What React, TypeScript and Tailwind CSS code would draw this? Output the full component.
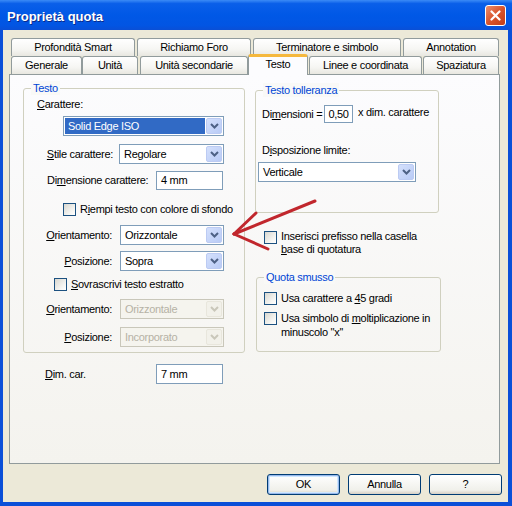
import React from "react";

const Chevron = ({ disabled }: { disabled?: boolean }) => (
  <svg width="9" height="6" viewBox="0 0 9 6">
    <path d="M1 1 L4.5 4.5 L8 1" fill="none" stroke={disabled ? "#c9c7ba" : "#4d6185"} strokeWidth="2" />
  </svg>
);

const Select = ({
  text,
  w,
  highlight,
  disabled,
}: {
  text: string;
  w: string;
  highlight?: boolean;
  disabled?: boolean;
}) => (
  <div
    className={`${w} h-[20px] flex items-stretch border p-[1px] ${
      disabled ? "border-[#c9c7ba] bg-[#f5f4ee] text-[#b5b2a5]" : "border-[#7f9db9] bg-white text-black"
    }`}
  >
    <div className="flex-1 flex items-center">
      {highlight ? (
        <div className="h-full flex-1 mr-[1px] bg-[#316ac5] text-white flex items-center pl-[3px]">{text}</div>
      ) : (
        <div className="pl-[3px]">{text}</div>
      )}
    </div>
    <div
      className={`w-[16px] flex items-center justify-center rounded-[2px] border ${
        disabled
          ? "border-[#e8e6dc] bg-[#f2f1ea]"
          : "border-[#bccbf3] bg-[linear-gradient(135deg,#d4e0fc,#b9cbf6)]"
      }`}
    >
      <Chevron disabled={disabled} />
    </div>
  </div>
);

const Input = ({ text, w, center }: { text: string; w: string; center?: boolean }) => (
  <div
    className={`${w} h-[19px] border border-[#7f9db9] bg-white flex items-center ${
      center ? "justify-center" : "pl-[4px]"
    }`}
  >
    {text}
  </div>
);

const Check = () => (
  <div className="w-[13px] h-[13px] shrink-0 border border-[#1c5180] bg-[linear-gradient(135deg,#d8d7d0,#f6f6f3_70%,#ffffff)]" />
);

const Group = ({
  label,
  className,
  children,
}: {
  label: string;
  className: string;
  children?: React.ReactNode;
}) => (
  <div className={`relative border border-[#d0d0bf] rounded-[3px] flex flex-col ${className}`}>
    <span className="absolute left-[7px] top-[-8px] px-[2px] leading-[14px] text-[#0046d5] bg-[#f9f9f7]">
      {label}
    </span>
    {children}
  </div>
);

const Tab = ({ label, w, ml }: { label: string; w: string; ml?: string }) => (
  <div
    className={`${w} ${ml ?? ""} h-[18px] flex items-center justify-center border border-b-0 border-[#919b9c] rounded-t-[3px] bg-[linear-gradient(#ffffff,#f6f6f3_60%,#e8e7e0)]`}
  >
    {label}
  </div>
);

export default function App() {
  return (
    <div
      className="relative w-[512px] h-[506px] flex flex-col bg-[#0a4fd8] text-[11px] leading-[13px] tracking-[-0.3px] text-black"
      style={{ fontFamily: "'Liberation Sans', Arial, sans-serif" }}
    >
      {/* Title bar */}
      <div className="h-[30px] flex items-center justify-between pl-[7px] pr-[6px] bg-[linear-gradient(#3b8bf6,#0a5fe9_12%,#0058e6_50%,#0255e3_85%,#0a4fd6)]">
        <span
          className="text-white font-bold text-[13px] tracking-[0px] pt-[2px]"
          style={{ textShadow: "1px 1px #0b2a8a" }}
        >
          Proprietà quota
        </span>
        <div className="w-[21px] h-[21px] rounded-[3px] border border-white bg-[linear-gradient(135deg,#eb8f6f,#d9542c_50%,#c13d17)] flex items-center justify-center">
          <svg width="11" height="11" viewBox="0 0 11 11">
            <path d="M1.5 1.5 L9.5 9.5 M9.5 1.5 L1.5 9.5" stroke="white" strokeWidth="2.2" strokeLinecap="round" />
          </svg>
        </div>
      </div>

      {/* Body */}
      <div className="flex-1 ml-[3px] mr-[4px] mb-[4px] bg-[#ece9d8] flex flex-col pl-[6px] pt-[8px]">
        {/* Tabs row 1 */}
        <div className="flex ml-[2px]">
          <Tab label="Profondità Smart" w="w-[124px]" />
          <Tab label="Richiamo Foro" w="w-[114px]" ml="ml-[2px]" />
          <Tab label="Terminatore e simbolo" w="w-[148px]" ml="ml-[2px]" />
          <Tab label="Annotation" w="w-[96px]" ml="ml-[2px]" />
        </div>
        {/* Tabs row 2 */}
        <div className="flex ml-[2px] h-[18px] items-end">
          <Tab label="Generale" w="w-[71px]" />
          <Tab label="Unità" w="w-[56px]" />
          <Tab label="Unità secondarie" w="w-[108px]" ml="ml-[2px]" />
          <div className="relative z-10 w-[60px] h-[21px] mb-[-1px] flex items-center justify-center border border-b-0 border-[#919b9c] border-t-[3px] border-t-[#f5b83d] rounded-t-[3px] bg-[#fcfcfe] pb-[3px]">
            Testo
          </div>
          <Tab label="Linee e coordinata" w="w-[113px]" ml="ml-[1px]" />
          <Tab label="Spaziatura" w="w-[76px]" ml="ml-[1px]" />
        </div>

        {/* Panel */}
        <div className="w-[491px] h-[390px] border border-[#919b9c] bg-[linear-gradient(#fcfcfe,#f4f3ee)] flex pl-[13px] pt-[13px]">
          {/* Left column */}
          <div className="w-[222px] flex flex-col">
            <Group label="Testo" className="h-[265px]">
              <div className="mt-[8px] h-[14px] pl-[13px] flex items-center">
                <span><u>C</u>arattere:</span>
              </div>
              <div className="mt-[5px] ml-[39px]">
                <Select text="Solid Edge ISO" w="w-[161px]" highlight />
              </div>
              <div className="mt-[8px] flex items-center">
                <span className="w-[89px] text-right"><u>S</u>tile carattere:</span>
                <div className="ml-[6px]">
                  <Select text="Regolare" w="w-[105px]" />
                </div>
              </div>
              <div className="mt-[7px] flex items-center">
                <span className="w-[132px] pl-[23px]">Di<u>m</u>ensione carattere:</span>
                <Input text="4 mm" w="w-[67px]" />
              </div>
              <div className="mt-[13px] ml-[39px] flex items-center">
                <Check />
                <span className="ml-[4px]">R<u>i</u>empi testo con colore di sfondo</span>
              </div>
              <div className="mt-[9px] flex items-center">
                <span className="w-[88px] text-right"><u>O</u>rientamento:</span>
                <div className="ml-[8px]">
                  <Select text="Orizzontale" w="w-[104px]" />
                </div>
              </div>
              <div className="mt-[6px] flex items-center">
                <span className="w-[88px] text-right"><u>P</u>osizione:</span>
                <div className="ml-[8px]">
                  <Select text="Sopra" w="w-[104px]" />
                </div>
              </div>
              <div className="mt-[7px] ml-[30px] flex items-center">
                <Check />
                <span className="ml-[4px]"><u>S</u>ovrascrivi testo estratto</span>
              </div>
              <div className="mt-[8px] flex items-center">
                <span className="w-[88px] text-right"><u>O</u>rientamento:</span>
                <div className="ml-[8px]">
                  <Select text="Orizzontale" w="w-[104px]" disabled />
                </div>
              </div>
              <div className="mt-[8px] flex items-center">
                <span className="w-[88px] text-right"><u>P</u>osizione:</span>
                <div className="ml-[8px]">
                  <Select text="Incorporato" w="w-[104px]" disabled />
                </div>
              </div>
            </Group>
            <div className="mt-[11px] flex items-center">
              <span className="w-[133px] pl-[22px]"><u>D</u>im. car.</span>
              <div className="h-[20px] w-[67px] border border-[#7f9db9] bg-white flex items-center pl-[4px]">
                7 mm
              </div>
            </div>
          </div>

          {/* Right column */}
          <div className="ml-[10px] mt-[2px] w-[185px] flex flex-col">
            <Group label="Testo tolleranza" className="w-[184px] h-[123px]">
              <div className="mt-[14px] flex items-center">
                <span className="w-[68px] pl-[6px]">Di<u>m</u>ensioni =</span>
                <div className="w-[29px] h-[18px] border border-[#7f9db9] bg-white flex items-center justify-center">
                  0,50
                </div>
                <span className="ml-[5px] mb-[4px]">x dim. carattere</span>
              </div>
              <div className="mt-[20px] h-[14px] pl-[6px] flex items-center">
                <span>D<u>i</u>sposizione limite:</span>
              </div>
              <div className="mt-[5px] ml-[2px]">
                <Select text="Verticale" w="w-[158px]" />
              </div>
            </Group>
            <div className="mt-[18px] ml-[9px] flex items-start">
              <Check />
              <div className="ml-[4px] mt-[-1px]">
                <div>Inserisci prefisso nella casella</div>
                <div><u>b</u>ase di quotatura</div>
              </div>
            </div>
            <Group label="Quota smusso" className="mt-[21px] ml-[1px] w-[185px] h-[75px]">
              <div className="mt-[14px] ml-[7px] flex items-center">
                <Check />
                <span className="ml-[4px]">Usa carattere a <u>4</u>5 gradi</span>
              </div>
              <div className="mt-[7px] ml-[7px] flex items-start">
                <Check />
                <div className="ml-[4px] mt-[-1px] leading-[14px]">
                  <div>Usa simbolo di <u>m</u>oltiplicazione in</div>
                  <div>minuscolo ''x''</div>
                </div>
              </div>
            </Group>
          </div>
        </div>

        {/* Buttons */}
        <div className="mt-[10px] flex justify-end gap-[8px] pr-[6px]">
          <div className="w-[73px] h-[21px] rounded-[3px] border border-[#003c74] bg-[linear-gradient(#ffffff,#f0f0ea_80%,#d6d0c5)] flex items-center justify-center shadow-[inset_0_0_0_1px_#98b8ea,inset_0_0_0_2px_#cee7ff]">
            OK
          </div>
          <div className="w-[73px] h-[21px] rounded-[3px] border border-[#003c74] bg-[linear-gradient(#ffffff,#f0f0ea_80%,#d6d0c5)] flex items-center justify-center">
            Annulla
          </div>
          <div className="w-[73px] h-[21px] rounded-[3px] border border-[#003c74] bg-[linear-gradient(#ffffff,#f0f0ea_80%,#d6d0c5)] flex items-center justify-center">
            ?
          </div>
        </div>
      </div>

      {/* Red annotation arrow */}
      <svg className="absolute left-0 top-0 pointer-events-none" width="512" height="506">
        <g stroke="#c1272d" strokeWidth="3" strokeLinecap="round" fill="none">
          <path d="M234 234 L315 201" />
          <path d="M234 234 L256 213" />
          <path d="M234 234 L268 249" />
        </g>
      </svg>
    </div>
  );
}
